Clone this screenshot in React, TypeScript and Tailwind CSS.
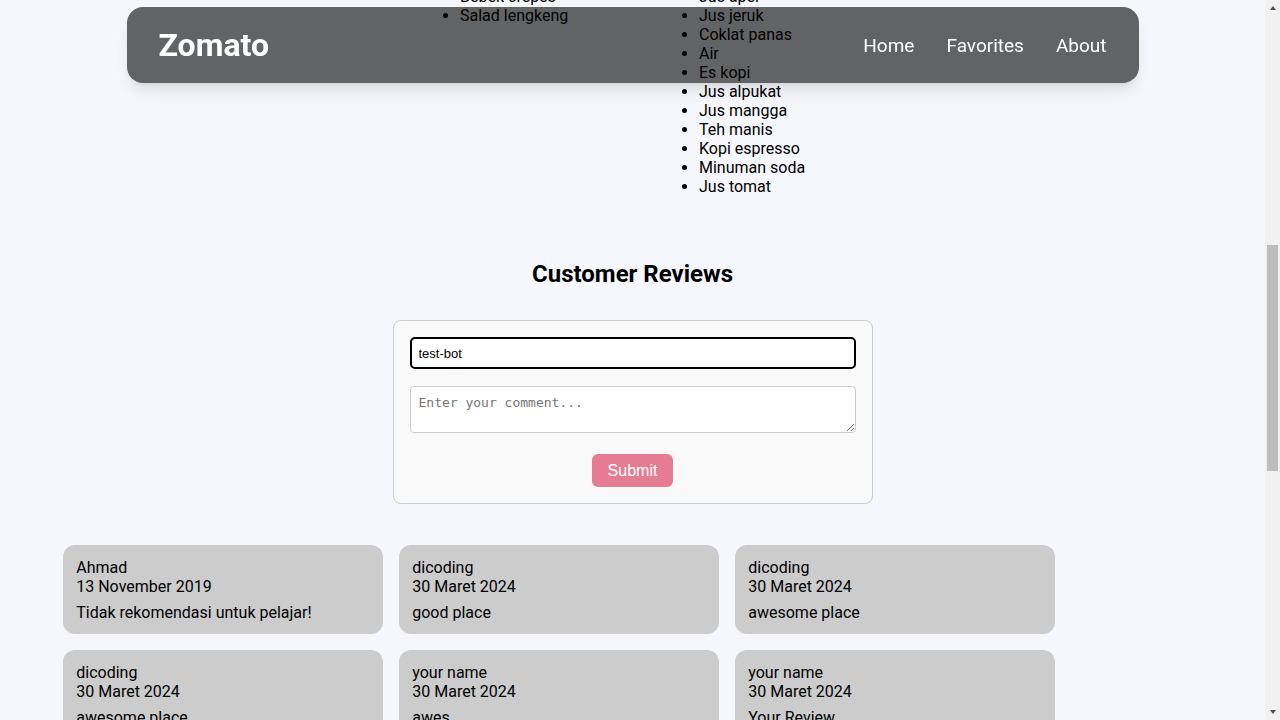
import React, { useLayoutEffect, useRef } from "react";

const foods = ["Paket rosemary", "Toastie salmon", "Bebek crepes", "Salad lengkeng"];

const drinks = [
  "Es krim",
  "Sirup",
  "Jus apel",
  "Jus jeruk",
  "Coklat panas",
  "Air",
  "Es kopi",
  "Jus alpukat",
  "Jus mangga",
  "Teh manis",
  "Kopi espresso",
  "Minuman soda",
  "Jus tomat",
];

type Review = { name: string; date: string; review: string };

const firstReviews: Review[] = [
  { name: "Ahmad", date: "13 November 2019", review: "Tidak rekomendasi untuk pelajar!" },
  { name: "dicoding", date: "30 Maret 2024", review: "good place" },
  { name: "dicoding", date: "30 Maret 2024", review: "awesome place" },
  { name: "dicoding", date: "30 Maret 2024", review: "awesome place" },
  { name: "your name", date: "30 Maret 2024", review: "awes" },
  { name: "your name", date: "30 Maret 2024", review: "Your Review" },
];

const extra: Review[] = [
  { name: "test-bot", date: "31 Maret 2024", review: "Enak sekali" },
  { name: "dicoding", date: "1 April 2024", review: "mantap" },
  { name: "your name", date: "2 April 2024", review: "Your Review" },
  { name: "budi", date: "3 April 2024", review: "Tempatnya nyaman" },
];

const reviews: Review[] = [
  ...firstReviews,
  ...Array.from({ length: 18 }, (_, i) => extra[i % extra.length]),
];

function Navbar() {
  return (
    <nav className="sticky top-[7px] z-10 mx-auto mt-[7px] flex h-[76px] w-[80%] items-center justify-between rounded-2xl bg-black/60 px-8 shadow-lg">
      <a href="#" className="text-[32px] font-bold leading-[38px] text-white">
        Zomato
      </a>
      <ul className="flex gap-8 text-[19px] leading-[23px] text-white">
        <li><a href="#">Home</a></li>
        <li><a href="#">Favorites</a></li>
        <li><a href="#">About</a></li>
      </ul>
    </nav>
  );
}

function ReviewCard({ name, date, review }: Review) {
  return (
    <div className="rounded-xl bg-[#cccccc] pb-3 pl-[13px] pr-3 pt-[13px] text-[16px] leading-[19px] text-black">
      <p>{name}</p>
      <p>{date}</p>
      <p className="mt-[7px]">{review}</p>
    </div>
  );
}

// the window's classic scrollbar, as it stands in the screenshot
function ScrollTrack() {
  return (
    <aside className="flex h-screen w-[15px] shrink-0 flex-col bg-[#f1f1f1]">
      <div className="flex h-[15px] justify-center pt-[6px]">
        <div className="h-0 w-0 border-x-[3.5px] border-b-[4px] border-x-transparent border-b-[#505050]" />
      </div>
      <div className="h-[230px]" />
      <div className="mx-[2px] h-[226px] bg-[#bdbdbd]" />
      <div className="flex-1" />
      <div className="flex h-[15px] justify-center pt-[5px]">
        <div className="h-0 w-0 border-x-[3.5px] border-t-[4px] border-x-transparent border-t-[#505050]" />
      </div>
    </aside>
  );
}

export default function App() {
  const pageRef = useRef<HTMLDivElement>(null);
  const menuRef = useRef<HTMLUListElement>(null);

  useLayoutEffect(() => {
    const page = pageRef.current;
    const menu = menuRef.current;
    if (page && menu) {
      const top = menu.getBoundingClientRect().top - page.getBoundingClientRect().top + page.scrollTop;
      page.scrollTop = top + 51;
    }
  }, []);

  return (
    <div className="flex h-screen bg-[#f6f7fc] font-['Roboto',sans-serif] text-black">
      <div ref={pageRef} className="h-screen flex-1 overflow-y-scroll [scrollbar-width:none]">
        <Navbar />

        <main>
          <section className="mx-auto w-[80%] pt-6">
            <div className="h-[310px] rounded-xl bg-gradient-to-br from-[#8a6f5a] to-[#3d2f26]" />
            <h2 className="mt-4 text-[28px] font-bold leading-[36px]">Melting Pot</h2>
            <p className="leading-6">Kota: Medan</p>
            <p className="leading-6">Alamat: Jln. Pandeglang no 19</p>
            <p className="leading-6">Rating: 4.2</p>
            <p className="mt-2 leading-6">
              Lorem ipsum dolor sit amet, consectetuer adipiscing elit. Aenean commodo ligula eget dolor. Aenean massa.
              Cum sociis natoque penatibus et magnis dis parturient montes, nascetur ridiculus mus.
            </p>
            <h3 className="mt-4 text-center text-[22px] font-bold leading-[28px]">Menu</h3>
          </section>

          <section className="flex justify-center">
            <div className="w-[239px]">
              <h4 className="mt-2 text-[18px] font-bold leading-6">Foods</h4>
              <ul ref={menuRef} className="mt-2 list-disc pl-10 text-[16px] leading-[19px]">
                {foods.map((f) => (
                  <li key={f}>{f}</li>
                ))}
              </ul>
            </div>
            <div className="w-[186px]">
              <h4 className="mt-2 text-[18px] font-bold leading-6">Drinks</h4>
              <ul className="mt-2 list-disc pl-10 text-[16px] leading-[19px]">
                {drinks.map((d) => (
                  <li key={d}>{d}</li>
                ))}
              </ul>
            </div>
          </section>

          <section className="pb-8 pt-[64px]">
            <h2 className="text-center text-[24px] font-bold leading-[28px]">Customer Reviews</h2>

            <form className="mx-auto mt-8 flex w-[480px] flex-col rounded-lg border border-[#cccccc] bg-[#f9f9f9] p-4">
              <input
                type="text"
                defaultValue="test-bot"
                className="h-[32px] rounded-[5px] border-2 border-black bg-white pl-[7px] font-['Liberation_Sans',Arial,sans-serif] text-[13px] text-black outline-none"
              />
              <textarea
                placeholder="Enter your comment..."
                className="mt-[17px] h-[47px] rounded-[4px] border border-[#cccccc] bg-white p-2 font-['DejaVu_Sans_Mono',monospace] text-[13px] leading-[15px] placeholder:text-[#757575]"
              />
              <button
                type="button"
                className="mt-[21px] self-center rounded-[6px] bg-[#e67c93] px-4 py-[7px] font-['Liberation_Sans',Arial,sans-serif] text-[16px] leading-[19px] text-white"
              >
                Submit
              </button>
            </form>

            <div className="mt-[41px] grid grid-cols-[repeat(auto-fill,320px)] gap-4 px-[5%]">
              {reviews.map((r, i) => (
                <ReviewCard key={i} {...r} />
              ))}
            </div>
          </section>
        </main>

        <footer className="flex h-[64px] items-center justify-center bg-[#636466] text-white">
          Copyright © 2024 - Zomato
        </footer>
      </div>

      <ScrollTrack />
    </div>
  );
}
